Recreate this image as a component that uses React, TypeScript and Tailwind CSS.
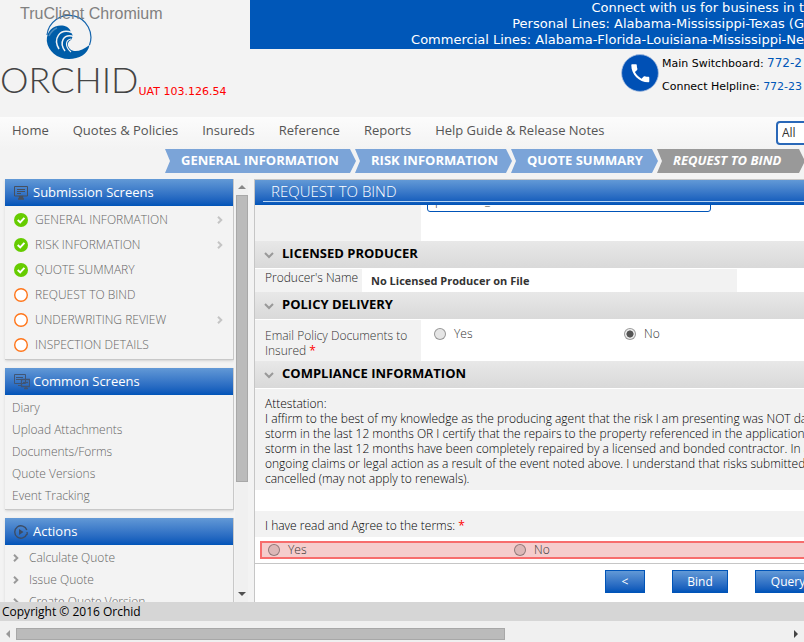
import React from "react";

const SANS = "font-['Open_Sans','Noto_Sans',sans-serif]";
const WIDE = "font-['DejaVu_Sans',sans-serif]";
const BLUE = "bg-linear-to-b from-[#6299d6] to-[#0054b8]";

function Logo() {
  return (
    <svg viewBox="0 0 46 46" className="block h-[46px] w-[46px]" aria-hidden="true">
      <path d="M1 21A22 22 0 1 1 43.500 31" fill="none" stroke="#1565ad" strokeWidth="1.200" />
      <path
        fill="#005da8"
        d="M.8 27C.5 17 7 11.500 15 11.500c4 0 8 1.500 9.500 5.500l2.500 5-2 4c-4 2-4 6-1 9 4 4 12 2 19.500-4C42 40 33 45 23 45 11 45 2 37 .8 27Z"
      />
      <path fill="none" stroke="#f3f3f3" strokeWidth="1.500" d="M26 18.500C13 14 7 25 13 35M28 22.500C17 19 13 29 19 37" />
      <path fill="none" stroke="#f3f3f3" strokeWidth="1.200" d="M25 25c-6 1-6 8 0 13" />
      <path fill="none" stroke="#f3f3f3" strokeWidth="1.600" d="M3 22c2-4 5-7 8-8" opacity="0.300" />
    </svg>
  );
}

function PhoneBadge() {
  return (
    <svg viewBox="0 0 38 38" className="h-[38px] w-[38px] shrink-0" aria-hidden="true">
      <circle cx="19" cy="19" r="18.4" fill="#0050b5" stroke="#a9bfe0" strokeWidth="0.8" />
      <path
        transform="translate(7.3 7.3)"
        fill="#fff"
        d="M6.62 10.79c1.44 2.83 3.76 5.14 6.59 6.59l2.2-2.2c.27-.27.67-.36 1.02-.24 1.12.37 2.33.57 3.57.57.55 0 1 .45 1 1V20c0 .55-.45 1-1 1-9.39 0-17-7.61-17-17 0-.55.45-1 1-1h3.5c.55 0 1 .45 1 1 0 1.25.2 2.45.57 3.57.11.35.03.74-.25 1.02l-2.2 2.2z"
      />
    </svg>
  );
}

function MonitorIcon() {
  return (
    <svg viewBox="0 0 14 14" className="h-[14px] w-[14px]" fill="none" stroke="#47505e" aria-hidden="true">
      <path d="M.5.5h13v9.500H.5zM3 3.500h8M3 5.500h8M3 7.500h4" />
      <path d="M5.500 10.500h3v1.500h-3zM4 13h6" strokeWidth="1.500" />
    </svg>
  );
}

function MonitorsIcon() {
  return (
    <svg viewBox="0 0 16 16" className="h-4 w-4" fill="none" stroke="#415573" aria-hidden="true">
      <path d="M.5.5h11v9H.5zM2 3.500h7M2 5.500h5M4 11.500h4" />
      <path d="M7.500 5.500h8v7h-8zM9 8.500h5M10 14.500h4M12 12v3" strokeWidth="1.300" />
    </svg>
  );
}

function PlayIcon() {
  return (
    <svg viewBox="0 0 14 14" className="h-[14px] w-[14px]" aria-hidden="true">
      <path d="M12.800 5A6.200 6.200 0 1 0 12.800 9" fill="none" stroke="#3d4c63" strokeWidth="1.400" />
      <path d="M5 4v6l4.500-3zM12 7.500l1.800-.5v3.500z" fill="#3d4c63" />
    </svg>
  );
}

function StatusIcon({ done }: { done: boolean }) {
  return (
    <svg viewBox="0 0 14 14" className="h-[14px] w-[14px] shrink-0" aria-hidden="true">
      {done ? (
        <>
          <circle cx="7" cy="7" r="7" fill="#66cc00" />
          <path d="M3.700 7l2.500 2.400 4.200-4.500" fill="none" stroke="#fff" strokeWidth="2" />
        </>
      ) : (
        <circle cx="7" cy="7" r="6.300" fill="#fff" stroke="#ff7519" strokeWidth="1.400" />
      )}
    </svg>
  );
}

function Arrow({ color }: { color: string }) {
  return (
    <svg viewBox="0 0 6 8" className="h-2 w-[6px] shrink-0" aria-hidden="true">
      <path d="M1 .7l3.300 3.300L1 7.300" fill="none" stroke={color} strokeWidth="2" />
    </svg>
  );
}

function Panel({ title, icon, children }: { title: string; icon: React.ReactNode; children: React.ReactNode }) {
  return (
    <section className="shrink-0 border-r border-b border-[#c8c8c8] bg-[#f3f3f3] shadow-sm">
      <h2 className={`flex h-[27px] items-center pl-2 text-[13px] text-white ${BLUE}`}>
        <span className="flex w-5 items-center pt-px pl-px">{icon}</span>
        {title}
      </h2>
      {children}
    </section>
  );
}

const steps = [
  { label: "GENERAL INFORMATION", done: true, more: true },
  { label: "RISK INFORMATION", done: true, more: true },
  { label: "QUOTE SUMMARY", done: true, more: false },
  { label: "REQUEST TO BIND", done: false, more: false },
  { label: "UNDERWRITING REVIEW", done: false, more: true },
  { label: "INSPECTION DETAILS", done: false, more: false },
];

function Sidebar() {
  return (
    <aside className="flex w-[248px] shrink-0 overflow-hidden">
      <div className="flex h-0 min-h-full flex-1 flex-col gap-2 overflow-hidden pl-[5px]">
        <Panel title="Submission Screens" icon={<MonitorIcon />}>
          <ul className="pt-px pb-[2px]">
            {steps.map((s) => (
              <li key={s.label}>
                <a href="#" className="flex h-[25px] items-center pr-[10px] pl-[9px] text-[12px] font-light text-[#666]">
                  <StatusIcon done={s.done} />
                  <span className="flex-1 pl-[7px]">{s.label}</span>
                  {s.more && <Arrow color="#c4c4c4" />}
                </a>
              </li>
            ))}
          </ul>
        </Panel>
        <Panel title="Common Screens" icon={<MonitorsIcon />}>
          <ul className="pt-[2px] pb-[2px]">
            {["Diary", "Upload Attachments", "Documents/Forms", "Quote Versions", "Event Tracking"].map((t) => (
              <li key={t}>
                <a href="#" className="flex h-[22px] items-center pl-[7px] text-[12px] font-light text-[#666]">{t}</a>
              </li>
            ))}
          </ul>
        </Panel>
        <Panel title="Actions" icon={<PlayIcon />}>
          <ul className="pt-[2px]">
            {["Calculate Quote", "Issue Quote", "Create Quote Version"].map((t) => (
              <li key={t}>
                <a href="#" className="flex h-[22px] items-center gap-[10px] pl-2 text-[12px] font-light text-[#666]">
                  <Arrow color="#999" />
                  {t}
                </a>
              </li>
            ))}
          </ul>
        </Panel>
      </div>
      <div className="ml-px flex w-[13px] flex-col items-center bg-[#f0f0f0] pl-px">
        <svg viewBox="0 0 8 4" className="my-[6px] h-1 w-2 shrink-0" aria-hidden="true"><path d="M0 4l4-4 4 4z" fill="#888" /></svg>
        <div className="h-[287px] w-3 border border-[#a8a8a8] bg-[#bbb]" />
        <svg viewBox="0 0 8 4" className="mt-auto mb-[6px] h-1 w-2 shrink-0" aria-hidden="true"><path d="M0 0l4 4 4-4z" fill="#505050" /></svg>
      </div>
    </aside>
  );
}

function SectionTitle({ children }: { children: React.ReactNode }) {
  return (
    <h3 className="border-b border-white">
      <button type="button" className="flex h-[27px] w-full items-center gap-2 bg-linear-to-b from-[#e8e8e8] to-[#d9d9d9] pb-[2px] pl-[9px] text-[13px] font-bold text-black">
        <svg viewBox="0 0 10 7" className="mt-1 h-[7px] w-[10px]" aria-hidden="true">
          <path d="M1 1l4 4 4-4" fill="none" stroke="#999" strokeWidth="2" />
        </svg>
        <span>{children}</span>
      </button>
    </h3>
  );
}

function Radio({ name, label, checked = false, className }: { name: string; label: string; checked?: boolean; className: string }) {
  return (
    <label className={`flex shrink-0 items-center gap-2 ${className}`}>
      <input
        type="radio"
        name={name}
        defaultChecked={checked}
        className="h-3 w-3 appearance-none rounded-full border border-black/35 bg-black/10 checked:bg-radial checked:from-[#555] checked:from-45% checked:to-[#eee] checked:to-55%"
      />
      {label}
    </label>
  );
}

function Main() {
  return (
    <main className="ml-[6px] flex min-w-0 flex-1 flex-col overflow-hidden border-t border-l border-[#c6c6c6] bg-white text-[12px] font-light text-[#333]">
      <h1 className={`flex h-[25px] shrink-0 flex-col pl-2 text-[15px] text-white ${BLUE}`}>
        <span className="h-[22px] border-b border-[#b8d4f0] pl-2 leading-[22px]">REQUEST TO BIND</span>
      </h1>
      <div className="flex h-[36px] shrink-0 overflow-hidden">
        <div className="w-[166px] shrink-0 bg-[#f2f2f2]" />
        <input aria-label="Producer" defaultValue="producer_" className="ml-[6px] -mt-4 h-[23px] w-[284px] rounded-[3px] border border-[#0054b8] bg-white px-[7px]" />
      </div>
      <SectionTitle>LICENSED PRODUCER</SectionTitle>
      <div className="flex h-[23px] shrink-0">
        <div className="w-[107px] shrink-0 bg-[#f2f2f2] pl-[10px] leading-[18px] text-[#222]">Producer's Name</div>
        <div className="w-[268px] shrink-0 pl-[9px] text-[11px] leading-6 font-bold">No Licensed Producer on File</div>
        <div className="w-[107px] shrink-0 bg-[#f2f2f2]" />
      </div>
      <SectionTitle>POLICY DELIVERY</SectionTitle>
      <div className="flex h-[41px] shrink-0" role="radiogroup" aria-label="Email Policy Documents to Insured">
        <div className="w-[166px] shrink-0 bg-[#f2f2f2] pt-2 pl-[10px] leading-[15px]">
          Email Policy Documents to Insured <span className="font-normal text-[#f00]">*</span>
        </div>
        <div className="flex h-[28px] pl-[13px]">
          <Radio name="email" label="Yes" className="w-[190px]" />
          <Radio name="email" label="No" checked className="w-[60px]" />
        </div>
      </div>
      <SectionTitle>COMPLIANCE INFORMATION</SectionTitle>
      <div className="h-[101px] shrink-0 overflow-hidden bg-[#f2f2f2] pt-[7px] pl-[10px] leading-[15px] whitespace-nowrap text-black">
        <p>Attestation:</p>
        <p>
          I affirm to the best of my knowledge as the producing agent that the risk I am presenting was NOT dam
          <br />
          storm in the last 12 months OR I certify that the repairs to the property referenced in the application as
          <br />
          storm in the last 12 months have been completely repaired by a licensed and bonded contractor. In add
          <br />
          ongoing claims or legal action as a result of the event noted above. I understand that risks submitted w
          <br />
          cancelled (may not apply to renewals).
        </p>
      </div>
      <div className="mt-[21px] h-[26px] shrink-0 bg-[#f2f2f2] pl-[10px] leading-[30px] text-black">
        I have read and Agree to the terms: <span className="font-normal text-[#f00]">*</span>
      </div>
      <div className="border-b border-[#c6c6c6] py-1 pl-[5px]">
        <div role="radiogroup" aria-label="Agree to the terms" className="flex h-[18px] border-2 border-r-0 border-[#f76c6c] bg-[#f5cccc] pl-[6px]">
          <Radio name="agree" label="Yes" className="w-[246px]" />
          <Radio name="agree" label="No" className="w-[246px]" />
        </div>
      </div>
      <div className="flex pt-[6px] pl-[350px] text-white">
        {[
          ["<", "w-[40px]"],
          ["Bind", "w-[56px]"],
          ["Query", "w-[66px]"],
        ].map(([t, w]) => (
          <button key={t} type="button" className={`mr-[27px] h-[23px] shrink-0 border border-[#0054b8] font-normal ${BLUE} ${w}`}>{t}</button>
        ))}
      </div>
    </main>
  );
}

const crumbs = [
  { label: "GENERAL INFORMATION", width: "w-[191px]", tone: "bg-[#7ba4d8]" },
  { label: "RISK INFORMATION", width: "w-[157px]", tone: "bg-[#7ba4d8]" },
  { label: "QUOTE SUMMARY", width: "w-[147px]", tone: "bg-[#7ba4d8]" },
  { label: "REQUEST TO BIND", width: "w-[148px]", tone: "bg-[#999] italic" },
];

export default function App() {
  return (
    <div className={`flex h-screen flex-col overflow-hidden bg-[#f3f3f3] ${SANS}`}>
      <header className="flex h-[117px] shrink-0">
        <div className="relative w-[250px] shrink-0">
          <div className="flex flex-col pt-[14px] pl-[46px]"><Logo /></div>
          <div className="flex items-end">
            <span className="font-['Lato',sans-serif] text-[36px] leading-[38px] font-light text-[#444]">ORCHID</span>
            <span className={`text-[11px] leading-[12px] text-[#f00] ${WIDE}`}>UAT 103.126.54</span>
          </div>
          <span className="absolute top-[5px] left-5 font-['Liberation_Sans',sans-serif] text-[16px] leading-[18px] text-[#808080]">TruClient Chromium</span>
        </div>
        <div className={`min-w-0 flex-1 overflow-hidden ${WIDE}`}>
          <div className="flex h-[49px] flex-col items-end bg-[#0057b8] text-[13px] leading-4 whitespace-nowrap text-white">
            <p>Connect with us for business in t</p>
            <p>Personal Lines: Alabama-Mississippi-Texas (G</p>
            <p>Commercial Lines: Alabama-Florida-Louisiana-Mississippi-Ne</p>
          </div>
          <div className="flex justify-end gap-[3px] pt-[5px] whitespace-nowrap text-black">
            <PhoneBadge />
            <div className="w-[142px] text-[11px] leading-[23px]">
              <p className="-mt-[2px]">Main Switchboard: <a href="#" className="text-[12px] text-[#0057b8]">772-2</a></p>
              <p>Connect Helpline: <a href="#" className="text-[#0057b8]">772-23</a></p>
            </div>
          </div>
        </div>
      </header>
      <nav className="flex h-8 shrink-0 items-center bg-linear-to-b from-[#fcfcfc] to-[#f3f3f3] pl-3 text-[13px] text-[#555]">
        <div className="flex flex-1 gap-6">
          {["Home", "Quotes & Policies", "Insureds", "Reference", "Reports", "Help Guide & Release Notes"].map((t) => (
            <a key={t} href="#" className="pb-[5px] whitespace-nowrap">{t}</a>
          ))}
        </div>
        <div className="w-7 overflow-hidden">
          <select aria-label="Search in" className="h-6 w-14 appearance-none rounded-[4px] border-2 border-[#2a68b8] bg-white pl-1 text-[12px] text-[#333]">
            <option>All</option>
          </select>
        </div>
      </nav>
      <ol className="flex h-[24px] shrink-0 overflow-hidden pl-[165px]">
        {crumbs.map((c) => (
          <li
            key={c.label}
            className={`-mr-px flex shrink-0 items-center pl-4 text-[13px] font-bold text-white [clip-path:polygon(0_0,calc(100%-6px)_0,100%_50%,calc(100%-6px)_100%,0_100%,5px_50%)] ${c.width} ${c.tone}`}
          >
            {c.label}
          </li>
        ))}
      </ol>
      <div className="flex min-h-0 flex-1 pt-[6px]">
        <Sidebar />
        <Main />
      </div>
      <footer className="h-[19px] shrink-0 bg-[#d6d6d6] pl-[2px] text-[12px] leading-[19px] text-black">Copyright © 2016 Orchid</footer>
      <div className="flex h-[21px] shrink-0 items-center bg-[#f0f0f0] px-[6px] pt-[5px]">
        <svg viewBox="0 0 4 8" className="h-2 w-1" aria-hidden="true"><path d="M4 0v8L0 4z" fill="#999" /></svg>
        <div className="ml-[6px] h-3 w-[489px] border border-[#a8a8a8] bg-[#bbb]" />
        <svg viewBox="0 0 4 8" className="ml-auto h-2 w-1" aria-hidden="true"><path d="M0 0v8l4-4z" fill="#444" /></svg>
      </div>
    </div>
  );
}
